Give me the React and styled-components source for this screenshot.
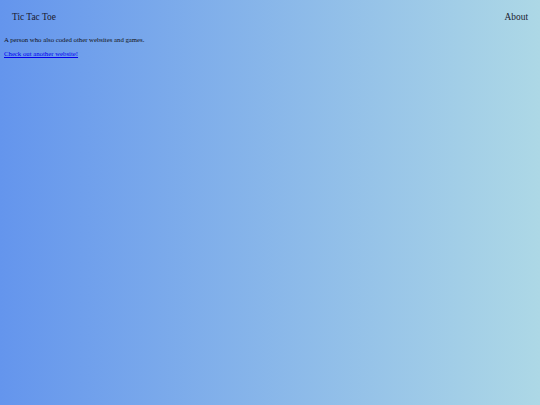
import React from "react";
import styled, { createGlobalStyle } from "styled-components";

const Global = createGlobalStyle`
  html, body { margin: 0; padding: 0; height: 100%; }
  body {
    font-family: "Liberation Serif", "Times New Roman", serif;
    background: linear-gradient(to right, #6495ed, #add8e6);
    min-height: 405px;
  }
`;

const Page = styled.div`
  min-height: 405px;
  padding: 0 4px;
  box-sizing: border-box;
`;

const Nav = styled.nav`
  display: flex;
  justify-content: space-between;
  align-items: center;
  padding: 12px 8px 0 8px;
  font-size: 9.4px;
  color: #1a1a2e;
`;

const NavItem = styled.span`
  cursor: pointer;
`;

const Text = styled.p`
  font-size: 6.75px;
  margin: 0;
  color: #111;
  margin-top: ${(p) => p.$top}px;
`;

const Link = styled.a`
  color: #0000ee;
  text-decoration: underline;
`;

export default function App() {
  return (
    <>
      <Global />
      <Page>
        <Nav>
          <NavItem>Tic Tac Toe</NavItem>
          <NavItem>About</NavItem>
        </Nav>
        <Text $top={13.5}>A person who also coded other websites and games.</Text>
        <Text $top={7.5}>
          <Link href="#">Check out another website!</Link>
        </Text>
      </Page>
    </>
  );
}
